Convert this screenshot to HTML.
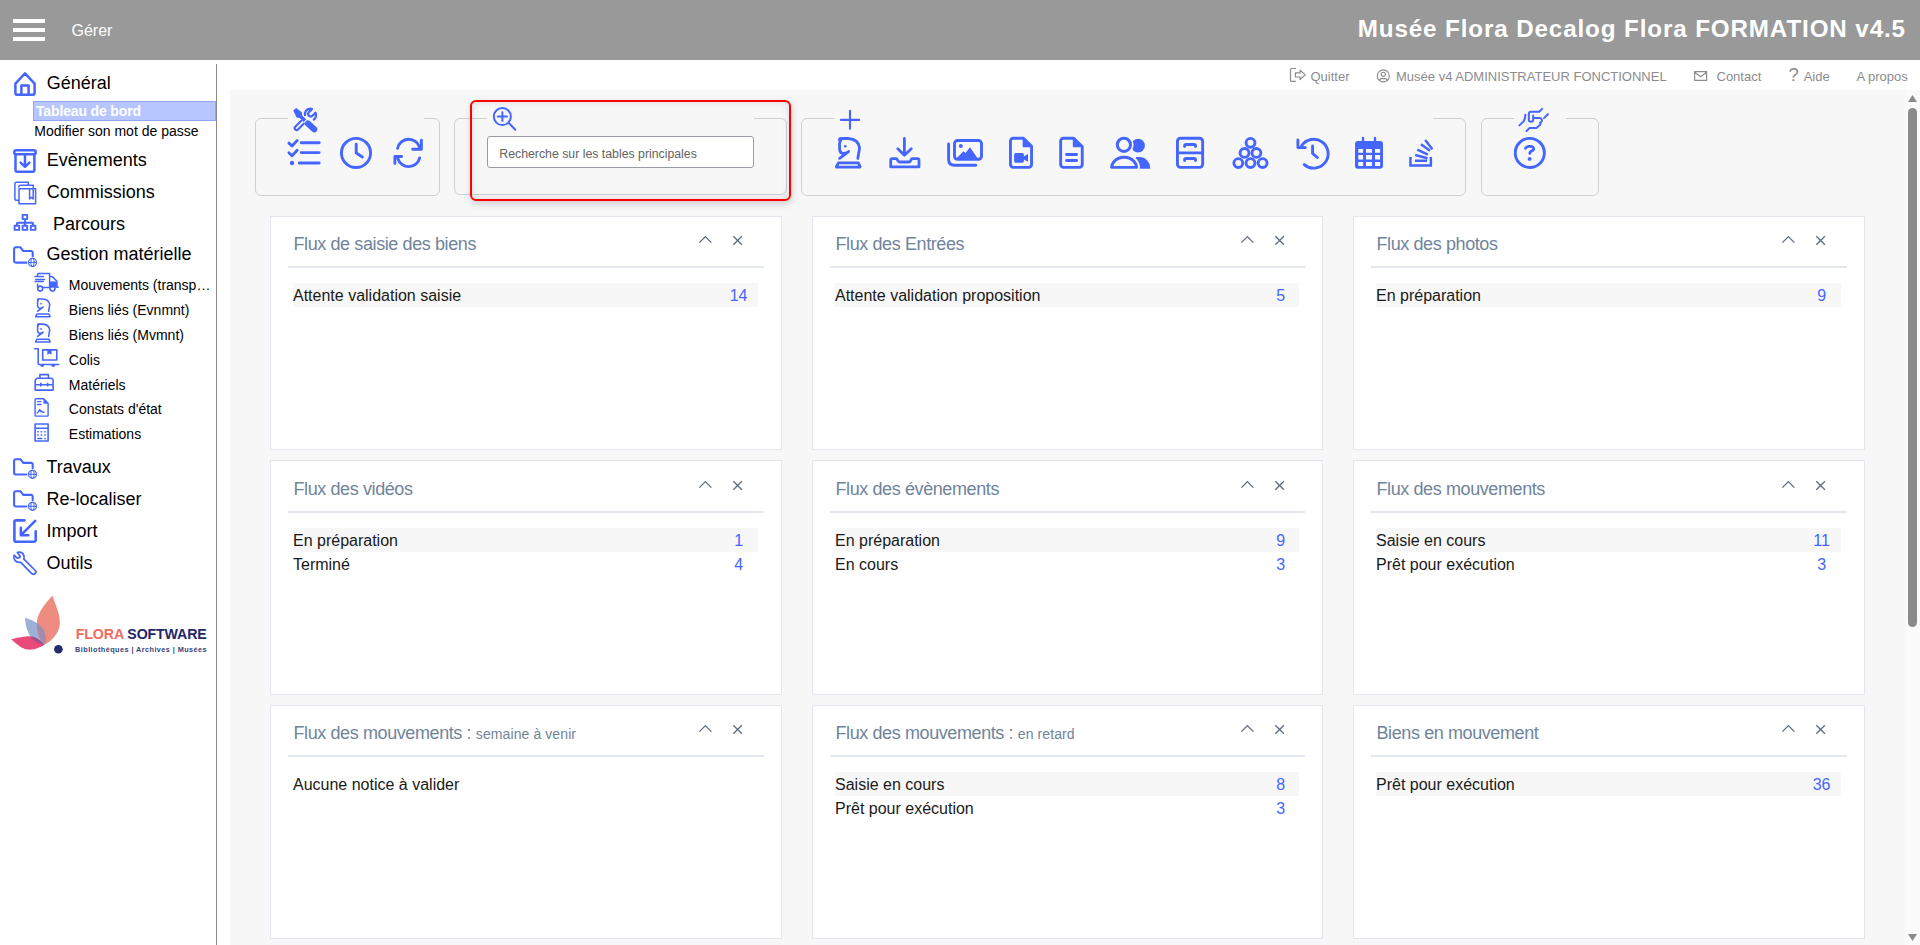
<!DOCTYPE html>
<html><head><meta charset="utf-8"><style>
html,body{margin:0;padding:0}
body{width:1920px;height:945px;overflow:hidden;position:relative;background:#fff;font-family:"Liberation Sans",sans-serif}
.t{position:absolute;white-space:nowrap}
.r{position:absolute}
svg.ov{position:absolute;left:0;top:0;pointer-events:none}
</style></head><body>
<div class="r" style="left:0px;top:0px;width:1920px;height:60px;background:#999999"></div>
<div class="r" style="left:13px;top:19px;width:32px;height:4px;background:#fff"></div>
<div class="r" style="left:13px;top:28px;width:32px;height:4px;background:#fff"></div>
<div class="r" style="left:13px;top:37px;width:32px;height:4px;background:#fff"></div>
<div class="t" style="left:71.50px;top:23.46px;font-size:16px;line-height:16px;color:#fff;font-weight:normal;">Gérer</div>
<div class="t" style="right:14.10px;top:16.81px;font-size:24.2px;line-height:24.2px;color:#fff;font-weight:bold;letter-spacing:0.88px">Musée Flora Decalog Flora FORMATION v4.5</div>
<div class="r" style="left:216px;top:64px;width:1px;height:881px;background:#8a8a8a"></div>
<div class="r" style="left:33px;top:101px;width:183px;height:20px;background:#b7c6ff;box-sizing:border-box;border:1px solid #8ea6ff"></div>
<div class="t" style="left:36.00px;top:104.05px;font-size:14px;line-height:14px;color:#fff;font-weight:bold;letter-spacing:-0.15px">Tableau de bord</div>
<div class="t" style="left:34.30px;top:123.95px;font-size:14px;line-height:14px;color:#000;font-weight:normal;">Modifier son mot de passe</div>
<div class="t" style="left:46.70px;top:74.26px;font-size:18px;line-height:18px;color:#000;font-weight:normal;">Général</div>
<div class="t" style="left:46.80px;top:151.36px;font-size:18px;line-height:18px;color:#000;font-weight:normal;">Evènements</div>
<div class="t" style="left:46.80px;top:183.16px;font-size:18px;line-height:18px;color:#000;font-weight:normal;">Commissions</div>
<div class="t" style="left:53.00px;top:215.36px;font-size:18px;line-height:18px;color:#000;font-weight:normal;">Parcours</div>
<div class="t" style="left:46.50px;top:245.16px;font-size:18px;line-height:18px;color:#000;font-weight:normal;">Gestion matérielle</div>
<div class="t" style="left:46.50px;top:457.96px;font-size:18px;line-height:18px;color:#000;font-weight:normal;">Travaux</div>
<div class="t" style="left:46.50px;top:489.76px;font-size:18px;line-height:18px;color:#000;font-weight:normal;">Re-localiser</div>
<div class="t" style="left:46.50px;top:521.96px;font-size:18px;line-height:18px;color:#000;font-weight:normal;">Import</div>
<div class="t" style="left:46.50px;top:553.76px;font-size:18px;line-height:18px;color:#000;font-weight:normal;">Outils</div>
<div class="t" style="left:68.80px;top:278.05px;font-size:14px;line-height:14px;color:#000;font-weight:normal;">Mouvements (transp…</div>
<div class="t" style="left:68.80px;top:302.75px;font-size:14px;line-height:14px;color:#000;font-weight:normal;">Biens liés (Evnmnt)</div>
<div class="t" style="left:68.80px;top:328.05px;font-size:14px;line-height:14px;color:#000;font-weight:normal;">Biens liés (Mvmnt)</div>
<div class="t" style="left:68.80px;top:352.75px;font-size:14px;line-height:14px;color:#000;font-weight:normal;">Colis</div>
<div class="t" style="left:68.80px;top:377.55px;font-size:14px;line-height:14px;color:#000;font-weight:normal;">Matériels</div>
<div class="t" style="left:68.80px;top:402.45px;font-size:14px;line-height:14px;color:#000;font-weight:normal;">Constats d'état</div>
<div class="t" style="left:68.80px;top:427.35px;font-size:14px;line-height:14px;color:#000;font-weight:normal;">Estimations</div>
<div class="t" style="left:75.80px;top:626.58px;font-size:14.2px;line-height:14.2px;color:#23266b;font-weight:bold;letter-spacing:-0.13px"><span style="color:#ee6c61">FLORA</span> SOFTWARE</div>
<div class="t" style="left:75.10px;top:645.92px;font-size:7.3px;line-height:7.3px;color:#3b3f7a;font-weight:bold;letter-spacing:0.43px">Bibliothèques | Archives | Musées</div>
<div class="t" style="left:1310.50px;top:69.80px;font-size:13px;line-height:13px;color:#8c8c8c;font-weight:normal;">Quitter</div>
<div class="t" style="left:1396.00px;top:69.80px;font-size:13px;line-height:13px;color:#8c8c8c;font-weight:normal;">Musée v4 ADMINISTRATEUR FONCTIONNEL</div>
<div class="t" style="left:1716.50px;top:69.80px;font-size:13px;line-height:13px;color:#8c8c8c;font-weight:normal;">Contact</div>
<div class="t" style="left:1803.70px;top:69.80px;font-size:13px;line-height:13px;color:#8c8c8c;font-weight:normal;">Aide</div>
<div class="t" style="left:1788.60px;top:66.14px;font-size:18.5px;line-height:18.5px;color:#8c8c8c;font-weight:normal;">?</div>
<div class="t" style="left:1856.50px;top:69.80px;font-size:13px;line-height:13px;color:#8c8c8c;font-weight:normal;">A propos</div>
<div class="r" style="left:230px;top:90px;width:1675px;height:855px;background:#f7f7f7"></div>
<div class="r" style="left:1905px;top:90px;width:15px;height:855px;background:#fafafa"></div>
<div class="r" style="left:255px;top:118px;width:185px;height:78px;box-sizing:border-box;border:1px solid #cfcfcf;border-radius:6px"></div>
<div class="r" style="left:288px;top:117px;width:136px;height:3px;background:#f7f7f7"></div>
<div class="r" style="left:454px;top:118px;width:333px;height:77px;box-sizing:border-box;border:1px solid #cfcfcf;border-radius:6px"></div>
<div class="r" style="left:487px;top:117px;width:267px;height:3px;background:#f7f7f7"></div>
<div class="r" style="left:801px;top:118px;width:665px;height:78px;box-sizing:border-box;border:1px solid #cfcfcf;border-radius:6px"></div>
<div class="r" style="left:834px;top:117px;width:599px;height:3px;background:#f7f7f7"></div>
<div class="r" style="left:1481px;top:118px;width:118px;height:78px;box-sizing:border-box;border:1px solid #cfcfcf;border-radius:6px"></div>
<div class="r" style="left:1514px;top:117px;width:52px;height:3px;background:#f7f7f7"></div>
<div class="r" style="left:487px;top:136px;width:267px;height:32px;box-sizing:border-box;background:#fff;border:1px solid #9b9ba6;border-radius:3px"></div>
<div class="t" style="left:499.30px;top:147.69px;font-size:12.3px;line-height:12.3px;color:#636363;font-weight:normal;">Recherche sur les tables principales</div>
<div class="r" style="left:469.5px;top:99.5px;width:321px;height:101px;box-sizing:border-box;border:2px solid #ff0000;border-radius:6px;box-shadow:1px 3px 7px rgba(0,0,0,0.16), inset 0 0 7px rgba(0,0,0,0.13)"></div>
<div class="r" style="left:270px;top:216px;width:512px;height:234px;box-sizing:border-box;background:#fff;border:1px solid #e3e6ec"></div>
<div class="r" style="left:288px;top:266px;width:476px;height:2px;background:#e3e7ee"></div>
<div class="t" style="left:293.50px;top:235.06px;font-size:18px;line-height:18px;color:#70849c;font-weight:normal;letter-spacing:-0.4px">Flux de saisie des biens</div>
<div class="r" style="left:293px;top:283px;width:465px;height:24px;background:#f7f7f7"></div>
<div class="t" style="left:293.00px;top:288.26px;font-size:16px;line-height:16px;color:#1a1a1a;font-weight:normal;">Attente validation saisie</div>
<div class="t" style="left:718.60px;top:288.26px;font-size:16px;line-height:16px;color:#4466ff;font-weight:normal;width:40px;text-align:center">14</div>
<div class="r" style="left:812px;top:216px;width:511px;height:234px;box-sizing:border-box;background:#fff;border:1px solid #e3e6ec"></div>
<div class="r" style="left:830px;top:266px;width:475px;height:2px;background:#e3e7ee"></div>
<div class="t" style="left:835.50px;top:235.06px;font-size:18px;line-height:18px;color:#70849c;font-weight:normal;letter-spacing:-0.4px">Flux des Entrées</div>
<div class="r" style="left:835px;top:283px;width:464px;height:24px;background:#f7f7f7"></div>
<div class="t" style="left:835.00px;top:288.26px;font-size:16px;line-height:16px;color:#1a1a1a;font-weight:normal;">Attente validation proposition</div>
<div class="t" style="left:1260.60px;top:288.26px;font-size:16px;line-height:16px;color:#4466ff;font-weight:normal;width:40px;text-align:center">5</div>
<div class="r" style="left:1353px;top:216px;width:512px;height:234px;box-sizing:border-box;background:#fff;border:1px solid #e3e6ec"></div>
<div class="r" style="left:1371px;top:266px;width:476px;height:2px;background:#e3e7ee"></div>
<div class="t" style="left:1376.50px;top:235.06px;font-size:18px;line-height:18px;color:#70849c;font-weight:normal;letter-spacing:-0.4px">Flux des photos</div>
<div class="r" style="left:1376px;top:283px;width:465px;height:24px;background:#f7f7f7"></div>
<div class="t" style="left:1376.00px;top:288.26px;font-size:16px;line-height:16px;color:#1a1a1a;font-weight:normal;">En préparation</div>
<div class="t" style="left:1801.60px;top:288.26px;font-size:16px;line-height:16px;color:#4466ff;font-weight:normal;width:40px;text-align:center">9</div>
<div class="r" style="left:270px;top:460px;width:512px;height:235px;box-sizing:border-box;background:#fff;border:1px solid #e3e6ec"></div>
<div class="r" style="left:288px;top:511px;width:476px;height:2px;background:#e3e7ee"></div>
<div class="t" style="left:293.50px;top:480.06px;font-size:18px;line-height:18px;color:#70849c;font-weight:normal;letter-spacing:-0.4px">Flux des vidéos</div>
<div class="r" style="left:293px;top:528px;width:465px;height:24px;background:#f7f7f7"></div>
<div class="t" style="left:293.00px;top:533.26px;font-size:16px;line-height:16px;color:#1a1a1a;font-weight:normal;">En préparation</div>
<div class="t" style="left:718.60px;top:533.26px;font-size:16px;line-height:16px;color:#4466ff;font-weight:normal;width:40px;text-align:center">1</div>
<div class="t" style="left:293.00px;top:557.26px;font-size:16px;line-height:16px;color:#1a1a1a;font-weight:normal;">Terminé</div>
<div class="t" style="left:718.60px;top:557.26px;font-size:16px;line-height:16px;color:#4466ff;font-weight:normal;width:40px;text-align:center">4</div>
<div class="r" style="left:812px;top:460px;width:511px;height:235px;box-sizing:border-box;background:#fff;border:1px solid #e3e6ec"></div>
<div class="r" style="left:830px;top:511px;width:475px;height:2px;background:#e3e7ee"></div>
<div class="t" style="left:835.50px;top:480.06px;font-size:18px;line-height:18px;color:#70849c;font-weight:normal;letter-spacing:-0.4px">Flux des évènements</div>
<div class="r" style="left:835px;top:528px;width:464px;height:24px;background:#f7f7f7"></div>
<div class="t" style="left:835.00px;top:533.26px;font-size:16px;line-height:16px;color:#1a1a1a;font-weight:normal;">En préparation</div>
<div class="t" style="left:1260.60px;top:533.26px;font-size:16px;line-height:16px;color:#4466ff;font-weight:normal;width:40px;text-align:center">9</div>
<div class="t" style="left:835.00px;top:557.26px;font-size:16px;line-height:16px;color:#1a1a1a;font-weight:normal;">En cours</div>
<div class="t" style="left:1260.60px;top:557.26px;font-size:16px;line-height:16px;color:#4466ff;font-weight:normal;width:40px;text-align:center">3</div>
<div class="r" style="left:1353px;top:460px;width:512px;height:235px;box-sizing:border-box;background:#fff;border:1px solid #e3e6ec"></div>
<div class="r" style="left:1371px;top:511px;width:476px;height:2px;background:#e3e7ee"></div>
<div class="t" style="left:1376.50px;top:480.06px;font-size:18px;line-height:18px;color:#70849c;font-weight:normal;letter-spacing:-0.4px">Flux des mouvements</div>
<div class="r" style="left:1376px;top:528px;width:465px;height:24px;background:#f7f7f7"></div>
<div class="t" style="left:1376.00px;top:533.26px;font-size:16px;line-height:16px;color:#1a1a1a;font-weight:normal;">Saisie en cours</div>
<div class="t" style="left:1801.60px;top:533.26px;font-size:16px;line-height:16px;color:#4466ff;font-weight:normal;width:40px;text-align:center">11</div>
<div class="t" style="left:1376.00px;top:557.26px;font-size:16px;line-height:16px;color:#1a1a1a;font-weight:normal;">Prêt pour exécution</div>
<div class="t" style="left:1801.60px;top:557.26px;font-size:16px;line-height:16px;color:#4466ff;font-weight:normal;width:40px;text-align:center">3</div>
<div class="r" style="left:270px;top:705px;width:512px;height:234px;box-sizing:border-box;background:#fff;border:1px solid #e3e6ec"></div>
<div class="r" style="left:288px;top:755px;width:476px;height:2px;background:#e3e7ee"></div>
<div class="t" style="left:293.50px;top:724.06px;font-size:18px;line-height:18px;color:#70849c;font-weight:normal;letter-spacing:-0.4px">Flux des mouvements : <span style="font-size:14px;letter-spacing:0.1px">semaine à venir</span></div>
<div class="t" style="left:293.00px;top:777.26px;font-size:16px;line-height:16px;color:#1a1a1a;font-weight:normal;">Aucune notice à valider</div>
<div class="r" style="left:812px;top:705px;width:511px;height:234px;box-sizing:border-box;background:#fff;border:1px solid #e3e6ec"></div>
<div class="r" style="left:830px;top:755px;width:475px;height:2px;background:#e3e7ee"></div>
<div class="t" style="left:835.50px;top:724.06px;font-size:18px;line-height:18px;color:#70849c;font-weight:normal;letter-spacing:-0.4px">Flux des mouvements : <span style="font-size:14px;letter-spacing:0.1px">en retard</span></div>
<div class="r" style="left:835px;top:772px;width:464px;height:24px;background:#f7f7f7"></div>
<div class="t" style="left:835.00px;top:777.26px;font-size:16px;line-height:16px;color:#1a1a1a;font-weight:normal;">Saisie en cours</div>
<div class="t" style="left:1260.60px;top:777.26px;font-size:16px;line-height:16px;color:#4466ff;font-weight:normal;width:40px;text-align:center">8</div>
<div class="t" style="left:835.00px;top:801.26px;font-size:16px;line-height:16px;color:#1a1a1a;font-weight:normal;">Prêt pour exécution</div>
<div class="t" style="left:1260.60px;top:801.26px;font-size:16px;line-height:16px;color:#4466ff;font-weight:normal;width:40px;text-align:center">3</div>
<div class="r" style="left:1353px;top:705px;width:512px;height:234px;box-sizing:border-box;background:#fff;border:1px solid #e3e6ec"></div>
<div class="r" style="left:1371px;top:755px;width:476px;height:2px;background:#e3e7ee"></div>
<div class="t" style="left:1376.50px;top:724.06px;font-size:18px;line-height:18px;color:#70849c;font-weight:normal;letter-spacing:-0.4px">Biens en mouvement</div>
<div class="r" style="left:1376px;top:772px;width:465px;height:24px;background:#f7f7f7"></div>
<div class="t" style="left:1376.00px;top:777.26px;font-size:16px;line-height:16px;color:#1a1a1a;font-weight:normal;">Prêt pour exécution</div>
<div class="t" style="left:1801.60px;top:777.26px;font-size:16px;line-height:16px;color:#4466ff;font-weight:normal;width:40px;text-align:center">36</div>
<div class="r" style="left:1908px;top:108px;width:9px;height:519px;background:#8a8a8a;border-radius:4.5px"></div>
<svg class="ov" width="1920" height="945" viewBox="0 0 1920 945">
<path d="M699.4 242.6 L705.4 236.6 L711.4 242.6" fill="none" stroke="#5d6d82" stroke-width="1.3"/>
<path d="M733.3000000000001 236.2 L741.9 244.8 M741.9 236.2 L733.3000000000001 244.8" fill="none" stroke="#5d6d82" stroke-width="1.3"/>
<path d="M1241.4 242.6 L1247.4 236.6 L1253.4 242.6" fill="none" stroke="#5d6d82" stroke-width="1.3"/>
<path d="M1275.3 236.2 L1283.8999999999999 244.8 M1283.8999999999999 236.2 L1275.3 244.8" fill="none" stroke="#5d6d82" stroke-width="1.3"/>
<path d="M1782.4 242.6 L1788.4 236.6 L1794.4 242.6" fill="none" stroke="#5d6d82" stroke-width="1.3"/>
<path d="M1816.3 236.2 L1824.8999999999999 244.8 M1824.8999999999999 236.2 L1816.3 244.8" fill="none" stroke="#5d6d82" stroke-width="1.3"/>
<path d="M699.4 487.6 L705.4 481.6 L711.4 487.6" fill="none" stroke="#5d6d82" stroke-width="1.3"/>
<path d="M733.3000000000001 481.2 L741.9 489.8 M741.9 481.2 L733.3000000000001 489.8" fill="none" stroke="#5d6d82" stroke-width="1.3"/>
<path d="M1241.4 487.6 L1247.4 481.6 L1253.4 487.6" fill="none" stroke="#5d6d82" stroke-width="1.3"/>
<path d="M1275.3 481.2 L1283.8999999999999 489.8 M1283.8999999999999 481.2 L1275.3 489.8" fill="none" stroke="#5d6d82" stroke-width="1.3"/>
<path d="M1782.4 487.6 L1788.4 481.6 L1794.4 487.6" fill="none" stroke="#5d6d82" stroke-width="1.3"/>
<path d="M1816.3 481.2 L1824.8999999999999 489.8 M1824.8999999999999 481.2 L1816.3 489.8" fill="none" stroke="#5d6d82" stroke-width="1.3"/>
<path d="M699.4 731.6 L705.4 725.6 L711.4 731.6" fill="none" stroke="#5d6d82" stroke-width="1.3"/>
<path d="M733.3000000000001 725.2 L741.9 733.8 M741.9 725.2 L733.3000000000001 733.8" fill="none" stroke="#5d6d82" stroke-width="1.3"/>
<path d="M1241.4 731.6 L1247.4 725.6 L1253.4 731.6" fill="none" stroke="#5d6d82" stroke-width="1.3"/>
<path d="M1275.3 725.2 L1283.8999999999999 733.8 M1283.8999999999999 725.2 L1275.3 733.8" fill="none" stroke="#5d6d82" stroke-width="1.3"/>
<path d="M1782.4 731.6 L1788.4 725.6 L1794.4 731.6" fill="none" stroke="#5d6d82" stroke-width="1.3"/>
<path d="M1816.3 725.2 L1824.8999999999999 733.8 M1824.8999999999999 725.2 L1816.3 733.8" fill="none" stroke="#5d6d82" stroke-width="1.3"/>
<path d="M15.4 93 V83.6 L25 73.3 L34.6 83.6 V93 a1.7 1.7 0 0 1 -1.7 1.7 H17.1 a1.7 1.7 0 0 1 -1.7 -1.7 Z M21.4 94.7 V85.4 H28.6 V94.7" fill="none" stroke="#4466ff" stroke-width="2.5" stroke-linecap="round" stroke-linejoin="round" />
<path d="M16.2 150.3 H33.8 a2 2 0 0 1 2 2 a2 2 0 0 1 -2 2 H16.2 a2 2 0 0 1 -2 -2 a2 2 0 0 1 2 -2 Z" fill="none" stroke="#4466ff" stroke-width="2.4" stroke-linecap="round" stroke-linejoin="round" />
<path d="M15.5 154.5 V170 a1.7 1.7 0 0 0 1.7 1.7 H32.7 a1.7 1.7 0 0 0 1.7 -1.7 V154.5 M25 155 V166.5 M20.6 162.6 L25 166.8 L29.4 162.6" fill="none" stroke="#4466ff" stroke-width="2.5" stroke-linecap="round" stroke-linejoin="round" />
<path d="M18.8 200.3 H16.7 a1.8 1.8 0 0 1 -1.8 -1.8 V184 a1.8 1.8 0 0 1 1.8 -1.8 H28.3 V185 M18.8 187 a1.8 1.8 0 0 1 1.8 -1.8 H33.3 V188.7 M19 188.8 H35.6 V203.8 H19 Z M29.6 188.8 V199 L31.4 197.4 L33.2 199 V188.8" fill="none" stroke="#4466ff" stroke-width="1.5" stroke-linecap="round" stroke-linejoin="round" />
<path d="M22.6 214.9 h4.6 v4.2 h-4.6 Z M14.6 225.7 h4.6 v4.2 h-4.6 Z M22.6 225.7 h4.6 v4.2 h-4.6 Z M30.8 225.7 h4.6 v4.2 h-4.6 Z M24.9 219.1 V225.7 M16.9 225.7 V223.8 a1 1 0 0 1 1 -1 H32.1 a1 1 0 0 1 1 1 V225.7" fill="none" stroke="#4466ff" stroke-width="1.9" stroke-linecap="round" stroke-linejoin="round" />
<path d="M27.0 262.59999999999997 H15.8 a1.7 1.7 0 0 1 -1.7 -1.7 V248.99999999999997 a1.7 1.7 0 0 1 1.7 -1.7 H20.4 L23.2 250.99999999999997 H31 a1.7 1.7 0 0 1 1.7 1.7 V256.7" fill="none" stroke="#4466ff" stroke-width="2.1" stroke-linecap="round" stroke-linejoin="round" />
<circle cx="32.5" cy="262.4" r="5.3" fill="#fff"/><circle cx="32.5" cy="262.4" r="4" fill="#fff" stroke="#4466ff" stroke-width="1.2"/>
<path d="M28.5 262.4 H36.5" stroke="#4466ff" stroke-width="1"/><ellipse cx="32.5" cy="262.4" rx="1.7" ry="4" fill="none" stroke="#4466ff" stroke-width="1"/>
<path d="M27.0 474.50000000000006 H15.8 a1.7 1.7 0 0 1 -1.7 -1.7 V460.90000000000003 a1.7 1.7 0 0 1 1.7 -1.7 H20.4 L23.2 462.90000000000003 H31 a1.7 1.7 0 0 1 1.7 1.7 V468.6" fill="none" stroke="#4466ff" stroke-width="2.1" stroke-linecap="round" stroke-linejoin="round" />
<circle cx="32.5" cy="474.30000000000007" r="5.3" fill="#fff"/><circle cx="32.5" cy="474.30000000000007" r="4" fill="#fff" stroke="#4466ff" stroke-width="1.2"/>
<path d="M28.5 474.30000000000007 H36.5" stroke="#4466ff" stroke-width="1"/><ellipse cx="32.5" cy="474.30000000000007" rx="1.7" ry="4" fill="none" stroke="#4466ff" stroke-width="1"/>
<path d="M27.0 506.50000000000006 H15.8 a1.7 1.7 0 0 1 -1.7 -1.7 V492.90000000000003 a1.7 1.7 0 0 1 1.7 -1.7 H20.4 L23.2 494.90000000000003 H31 a1.7 1.7 0 0 1 1.7 1.7 V500.6" fill="none" stroke="#4466ff" stroke-width="2.1" stroke-linecap="round" stroke-linejoin="round" />
<circle cx="32.5" cy="506.30000000000007" r="5.3" fill="#fff"/><circle cx="32.5" cy="506.30000000000007" r="4" fill="#fff" stroke="#4466ff" stroke-width="1.2"/>
<path d="M28.5 506.30000000000007 H36.5" stroke="#4466ff" stroke-width="1"/><ellipse cx="32.5" cy="506.30000000000007" rx="1.7" ry="4" fill="none" stroke="#4466ff" stroke-width="1"/>
<path d="M24.5 520.4 H16.2 a1.8 1.8 0 0 0 -1.8 1.8 V539.9 a1.8 1.8 0 0 0 1.8 1.8 H33.9 a1.8 1.8 0 0 0 1.8 -1.8 V531.4 M35.2 520.9 L21.2 534.9 M20.9 527.8 V535.2 H28.3" fill="none" stroke="#4466ff" stroke-width="2.6" stroke-linecap="round" stroke-linejoin="round" />
<path d="M17.4 552.4 Q21.9 551.2 23.6 554.9 Q24.5 557.3 23.9 559.2 L35.3 570.5 a2.35 2.35 0 0 1 -3.3 3.3 L20.7 562.4 Q16.1 562.8 14.4 559.4 Q13.4 557.2 14.2 555.2 L16.9 557.9 Q19.3 558.6 20.3 556.4 Z" fill="none" stroke="#4466ff" stroke-width="1.75" stroke-linecap="round" stroke-linejoin="round" />
<path d="M37.6 275.2 V274.3 a0.8 0.8 0 0 1 0.8 -0.8 H49.6 V287.3 M37.6 284.2 V287.3 M35 276.6 H43.3 M35.8 279.4 H44.5 M35 281.6 H43.3 M49.6 276.6 H52.2 L56.9 281.2 V287.3 H58.2 M42.8 287.5 H49.9" fill="none" stroke="#4466ff" stroke-width="1.5" stroke-linecap="round" stroke-linejoin="round" />
<path d="M49.6 281.4 H57 V287.6 H49.6 Z" fill="#4466ff" />
<circle cx="40.2" cy="288.6" r="2.5" fill="none" stroke="#4466ff" stroke-width="1.6"/><circle cx="52.5" cy="288.6" r="2.5" fill="none" stroke="#4466ff" stroke-width="1.6"/>
<g transform="translate(-470.338 213.074) scale(0.605 0.62)"><path d="M839.6 158.3 L848.6 151.6 M848.6 151.6 Q845.5 153.7 842.6 153.4 Q840 152.8 839.6 149.5 L839.5 143.8 Q839.7 141.3 840.8 140.6 L839.3 139.6 Q839.6 138.5 841 138.5 H848.3 Q858.3 139 859.6 148 L857.8 158.4 M838.5 162.8 H858.3 L860.2 166.8 L859.8 167.2 H836.6 L836.4 166.7 Z" fill="none" stroke="#4466ff" stroke-width="2.6" stroke-linecap="round" stroke-linejoin="round"/><circle cx="845.2" cy="146.2" r="1.4" fill="#4466ff"/></g>
<g transform="translate(-470.338 238.274) scale(0.605 0.62)"><path d="M839.6 158.3 L848.6 151.6 M848.6 151.6 Q845.5 153.7 842.6 153.4 Q840 152.8 839.6 149.5 L839.5 143.8 Q839.7 141.3 840.8 140.6 L839.3 139.6 Q839.6 138.5 841 138.5 H848.3 Q858.3 139 859.6 148 L857.8 158.4 M838.5 162.8 H858.3 L860.2 166.8 L859.8 167.2 H836.6 L836.4 166.7 Z" fill="none" stroke="#4466ff" stroke-width="2.6" stroke-linecap="round" stroke-linejoin="round"/><circle cx="845.2" cy="146.2" r="1.4" fill="#4466ff"/></g>
<path d="M34.6 348.7 H38.2 V363.3 a1.2 1.2 0 0 0 1.2 1.2 H58.6" fill="none" stroke="#4466ff" stroke-width="1.6" stroke-linecap="round" stroke-linejoin="round" />
<path d="M42.7 349.9 H56.8 V360 H42.7 Z" fill="none" stroke="#4466ff" stroke-width="1.6" stroke-linecap="round" stroke-linejoin="round" />
<path d="M47.3 349.6 H51.6 V354.7 L49.5 353.6 L47.3 354.7 Z" fill="#4466ff" />
<path d="M40.2 365 a2 2 0 0 0 4 0 Z M51.3 365 a2 2 0 0 0 4 0 Z" fill="#4466ff" />
<path d="M39.9 378 V374.6 H48.4 V378 M37 378.3 H51.5 L53.1 379.9 V390.1 H35.2 V380 Z M35.2 384.7 H53.1" fill="none" stroke="#4466ff" stroke-width="1.6" stroke-linecap="round" stroke-linejoin="round" />
<path d="M40 382.8 h1.7 v3.8 h-1.7 Z M46.8 382.8 h1.7 v3.8 h-1.7 Z" fill="#4466ff" />
<path d="M35.1 399.6 a0.9 0.9 0 0 1 0.9 -0.9 H43.7 L48.1 403.3 V415.2 a0.9 0.9 0 0 1 -0.9 0.9 H36 a0.9 0.9 0 0 1 -0.9 -0.9 Z M37.5 401.6 H41 M37.5 404.5 H41 M37.2 413 Q38.5 412 39.7 409.5 Q40.6 413 41.5 410.8 Q42.5 412.5 44 412.3" fill="none" stroke="#4466ff" stroke-width="1.4" stroke-linecap="round" stroke-linejoin="round" />
<path d="M43.5 398.7 L48.6 403.8 H43.5 Z" fill="#4466ff" />
<path d="M35.1 424 H48.1 V441 H35.1 Z M35.1 428.3 H48.1" fill="none" stroke="#4466ff" stroke-width="1.6" stroke-linecap="round" stroke-linejoin="round" />
<path d="M37.3 431 h1.5 v1.4 h-1.5 Z M40.7 431 h1.5 v1.4 h-1.5 Z M44.2 431 h1.5 v1.4 h-1.5 Z M37.3 434.3 h1.5 v1.4 h-1.5 Z M40.7 434.3 h1.5 v1.4 h-1.5 Z M44.2 434.3 h1.5 v1.4 h-1.5 Z M37.3 437.8 h5 v1.4 h-5 Z M44.2 437.8 h1.5 v1.4 h-1.5 Z" fill="#4466ff" />
<path d="M293.3 110.6 L296.1 107.9 L301.8 112.3 L302.2 115.4 L306.2 119.4 L303.6 121.9 L299.6 117.9 L296.6 117.5 Z" fill="#4466ff" />
<path d="M307.9 123.5 L314.2 129.3" fill="none" stroke="#4466ff" stroke-width="6.2" stroke-linecap="round" stroke-linejoin="round" />
<path d="M301.2 120.8 L295.3 126.7 a1.9 1.9 0 0 0 2.7 2.7 L303.9 123.5" fill="none" stroke="#4466ff" stroke-width="2.1" stroke-linecap="round" stroke-linejoin="round" />
<path d="M305 115.2 Q304.6 110.3 309 108.9 Q310.6 108.5 311.9 109.1 L308.9 112.2 a2.5 2.5 0 0 0 3.6 3.6 L315.5 112.8 Q316.4 114.6 316 116.3 Q315.4 118.5 313.9 119.5" fill="none" stroke="#4466ff" stroke-width="2.3" stroke-linecap="round" stroke-linejoin="round" />
<path d="M288.9 143.1 L292 146 L297.2 140.6 M288.9 152.8 L292 155.7 L297.2 150.3" fill="none" stroke="#4466ff" stroke-width="2.9" stroke-linecap="round" stroke-linejoin="round" />
<path d="M301.2 142.7 H319.2 M301.2 152.6 H319.2 M299.2 163 H319.2" fill="none" stroke="#4466ff" stroke-width="2.9" stroke-linecap="round" stroke-linejoin="round" />
<circle cx="292" cy="163" r="2.2" fill="#4466ff"/>
<circle cx="356" cy="152.9" r="14.55" fill="none" stroke="#4466ff" stroke-width="2.9"/>
<path d="M356.2 144.3 V153.1 L362.4 156.9" fill="none" stroke="#4466ff" stroke-width="2.9" stroke-linecap="round" stroke-linejoin="round" />
<path d="M397.6 148.3 A11.3 11.3 0 0 1 419.6 147.6 M421.4 140.2 V149.3 H412.6" fill="none" stroke="#4466ff" stroke-width="2.9" stroke-linecap="round" stroke-linejoin="round" />
<path d="M419.7 157.9 A11.3 11.3 0 0 1 397.8 158.4 M394.9 163.6 V156.5 H401.6" fill="none" stroke="#4466ff" stroke-width="2.9" stroke-linecap="round" stroke-linejoin="round" />
<circle cx="502.35" cy="116.55" r="8.55" fill="none" stroke="#4466ff" stroke-width="2"/>
<path d="M497.8 116.6 H507 M502.4 112.2 V121.1 M508.8 123 L515.3 129.7" fill="none" stroke="#4466ff" stroke-width="2" stroke-linecap="round" stroke-linejoin="round" />
<path d="M850 110.8 V128.7 M840.9 119.9 H859.1" fill="none" stroke="#4466ff" stroke-width="2.1" stroke-linecap="round" stroke-linejoin="round" />
<path d="M839.6 158.3 L848.6 151.6 M848.6 151.6 Q845.5 153.7 842.6 153.4 Q840 152.8 839.6 149.5 L839.5 143.8 Q839.7 141.3 840.8 140.6 L839.3 139.6 Q839.6 138.5 841 138.5 H848.3 Q858.3 139 859.6 148 L857.8 158.4" fill="none" stroke="#4466ff" stroke-width="2.8" stroke-linecap="round" stroke-linejoin="round" />
<circle cx="845.2" cy="146.2" r="1.3" fill="#4466ff"/>
<path d="M838.5 162.8 H858.3 L860.2 166.8 L859.8 167.2 H836.6 L836.4 166.7 Z" fill="none" stroke="#4466ff" stroke-width="2.8" stroke-linecap="round" stroke-linejoin="round" />
<path d="M904.4 138.4 V154.8 M897.8 148.7 L904.4 155.2 L911.3 148.7 M896.6 158.7 L898.2 161 Q898.6 162 900 162 H908.7 Q910 162 910.4 161 L911.8 158.7 H917.3 a1.7 1.7 0 0 1 1.7 1.7 V166.9 H890.7 V160.4 a1.7 1.7 0 0 1 1.7 -1.7 Z" fill="none" stroke="#4466ff" stroke-width="2.8" stroke-linecap="round" stroke-linejoin="round" />
<path d="M957.5 140.55 H978.5 a3 3 0 0 1 3 3 V156.25 a3 3 0 0 1 -3 3 H957.5 a3 3 0 0 1 -3 -3 V143.55 a3 3 0 0 1 3 -3 Z" fill="none" stroke="#4466ff" stroke-width="2.9" stroke-linecap="round" stroke-linejoin="round" />
<path d="M956.7 158.2 L963.3 151.3 L965.5 152.9 L970 147.3 L977.5 158.2 Z" fill="#4466ff" />
<circle cx="960.8" cy="145.9" r="2" fill="#4466ff"/>
<path d="M948.6 144 V159.5 Q948.6 165.2 954.6 165.2 H975.8" fill="none" stroke="#4466ff" stroke-width="2.9" stroke-linecap="round" stroke-linejoin="round" />
<path d="M1013.3 138.25 H1023.5 L1031.55 146.3 V164.5 a2.85 2.85 0 0 1 -2.85 2.85 H1013.3 a2.85 2.85 0 0 1 -2.85 -2.85 V141.1 a2.85 2.85 0 0 1 2.85 -2.85 Z" fill="none" stroke="#4466ff" stroke-width="2.9" stroke-linecap="round" stroke-linejoin="round" />
<path d="M1022.6 138.6 L1031.4 147.3 H1023.3 a0.7 0.7 0 0 1 -0.7 -0.7 Z" fill="#4466ff" />
<path d="M1015.8 152.9 H1022.2 a1.7 1.7 0 0 1 1.7 1.7 V156.2 L1028 154 V161.8 L1023.9 159.5 V161.1 a1.7 1.7 0 0 1 -1.7 1.7 H1015.8 a1.7 1.7 0 0 1 -1.7 -1.7 V154.6 a1.7 1.7 0 0 1 1.7 -1.7 Z" fill="#4466ff" />
<path d="M1063.5 138.25 H1073.7 L1082.25 146.5 V164.5 a2.85 2.85 0 0 1 -2.85 2.85 H1063.5 a2.85 2.85 0 0 1 -2.85 -2.85 V141.1 a2.85 2.85 0 0 1 2.85 -2.85 Z" fill="none" stroke="#4466ff" stroke-width="2.9" stroke-linecap="round" stroke-linejoin="round" />
<path d="M1072.8 138.6 L1082 147.3 H1073.5 a0.7 0.7 0 0 1 -0.7 -0.7 Z" fill="#4466ff" />
<path d="M1066.5 154.5 H1076.6 M1066.5 160.5 H1076.6" fill="none" stroke="#4466ff" stroke-width="2.9" stroke-linecap="round" stroke-linejoin="round" />
<circle cx="1138.1" cy="145.6" r="6.8" fill="#4466ff"/>
<path d="M1136 157.1 H1139.5 a10.6 10.6 0 0 1 10.6 10.6 V168.8 H1136 Z" fill="#4466ff" />
<circle cx="1123.9" cy="144.85" r="9.7" fill="#f7f7f7"/>
<path d="M1110.3 168.6 a12.9 12 0 0 1 12.9 -12.6 h1.5 a12.9 12 0 0 1 12.9 12.6 Z" fill="none" stroke="#f7f7f7" stroke-width="4.6" stroke-linejoin="round"/>
<circle cx="1123.9" cy="144.85" r="6.6" fill="none" stroke="#4466ff" stroke-width="3"/>
<path d="M1111.5 167.35 a12.3 10.9 0 0 1 11.9 -10.1 h1.4 a12.3 10.9 0 0 1 11.9 10.1 Z" fill="none" stroke="#4466ff" stroke-width="2.9" stroke-linecap="round" stroke-linejoin="round" />
<path d="M1180.45 138.25 H1199.65 a3 3 0 0 1 3 3 V164.35 a3 3 0 0 1 -3 3 H1180.45 a3 3 0 0 1 -3 -3 V141.25 a3 3 0 0 1 3 -3 Z M1177.5 152.9 H1202.6 M1184.6 146.6 V145.8 a1.3 1.3 0 0 1 1.3 -1.3 H1194.2 a1.3 1.3 0 0 1 1.3 1.3 V146.6 M1184.6 160.5 V159.8 a1.3 1.3 0 0 1 1.3 -1.3 H1194.2 a1.3 1.3 0 0 1 1.3 1.3 V160.5" fill="none" stroke="#4466ff" stroke-width="2.9" stroke-linecap="round" stroke-linejoin="round" />
<circle cx="1250.5" cy="142.8" r="4.45" fill="none" stroke="#4466ff" stroke-width="2.9"/>
<circle cx="1244.5" cy="152.95" r="4.45" fill="none" stroke="#4466ff" stroke-width="2.9"/>
<circle cx="1256.4" cy="152.95" r="4.45" fill="none" stroke="#4466ff" stroke-width="2.9"/>
<circle cx="1238.3" cy="163.1" r="4.45" fill="none" stroke="#4466ff" stroke-width="2.9"/>
<circle cx="1250.5" cy="163.1" r="4.45" fill="none" stroke="#4466ff" stroke-width="2.9"/>
<circle cx="1262.6" cy="163.1" r="4.45" fill="none" stroke="#4466ff" stroke-width="2.9"/>
<path d="M1301.6 145.8 A14.45 14.45 0 1 1 1304.2 164.6 M1297.9 139.9 V147.6 H1305.4 M1312.6 145.9 V153.5 L1317.4 157.5" fill="none" stroke="#4466ff" stroke-width="2.9" stroke-linecap="round" stroke-linejoin="round" />
<path d="M1358 141 H1380 a3 3 0 0 1 3 3 V165.7 a3 3 0 0 1 -3 3 H1358 a3 3 0 0 1 -3 -3 V144 a3 3 0 0 1 3 -3 Z M1358.3 148.9 V152.8 H1363.1 V148.9 Z M1366 148.9 V152.8 H1372 V148.9 Z M1375 148.9 V152.8 H1380.1 V148.9 Z M1358.3 155.1 V159.6 H1363.1 V155.1 Z M1366 155.1 V159.6 H1372 V155.1 Z M1375 155.1 V159.6 H1380.1 V155.1 Z M1358.3 162 V166 H1363.1 V162 Z M1366 162 V166 H1372 V162 Z M1375 162 V166 H1380.1 V162 Z" fill="#4466ff" fill-rule="evenodd"/>
<path d="M1363 138 V141 M1375 138 V141" fill="none" stroke="#4466ff" stroke-width="2.4" stroke-linecap="round" stroke-linejoin="round" />
<path d="M1410.45 157.1 V165.45 H1430.85 V157.1" fill="none" stroke="#4466ff" stroke-width="2.5"/>
<path d="M1415 160.8 H1427.1 M1415.2 155 L1427.5 158.3 M1417.3 149.6 L1427.9 154.6 M1420.9 144.2 L1430 150.8 M1425.2 140 L1432.4 149.2" fill="none" stroke="#4466ff" stroke-width="2.5"/>
<path d="M1542.1 108.9 L1539.3 111.8 H1531.2 a2.4 2.4 0 0 0 -2.4 2.4 V119.6 a2.2 2.2 0 0 0 4.4 0 V115.6 M1533.2 117.9 H1539.7 a2.4 2.4 0 0 1 1.4 4.2 L1540.1 122.7 a1.5 1.5 0 0 1 0 2 L1536.5 128.1 H1529.4 L1526.6 131 M1525.4 114.8 Q1525 119.5 1523.8 121.1 L1519.4 125.4 M1547.9 114.2 L1544 118.1" fill="none" stroke="#4466ff" stroke-width="2" stroke-linecap="round" stroke-linejoin="round" />
<circle cx="1529.8" cy="152.9" r="14.55" fill="none" stroke="#4466ff" stroke-width="2.9"/>
<path d="M1525.5 148.3 Q1526.5 146.4 1528.7 146.4 H1531.4 a2.3 2.3 0 0 1 1.2 4.2 L1530.7 151.6 Q1529.8 152.2 1529.8 153.4" fill="none" stroke="#4466ff" stroke-width="2.8" stroke-linecap="round" stroke-linejoin="round" />
<circle cx="1529.6" cy="158.9" r="1.9" fill="#4466ff"/>
<path d="M1295.6 68.5 H1291.6 a1.1 1.1 0 0 0 -1.1 1.1 V80.2 a1.1 1.1 0 0 0 1.1 1.1 H1295.6 M1295.4 72.9 H1300.1 V70.3 L1305.3 74.9 L1300.1 79.5 V77 H1295.4 Z" fill="none" stroke="#8c8c8c" stroke-width="1.2" stroke-linecap="round" stroke-linejoin="round" />
<circle cx="1383.3" cy="75.9" r="6" fill="none" stroke="#8c8c8c" stroke-width="1.1"/><circle cx="1383.3" cy="74.3" r="2.1" fill="none" stroke="#8c8c8c" stroke-width="1.1"/>
<path d="M1379.3 80.6 L1380.6 78.6 H1386 L1387.3 80.6" fill="none" stroke="#8c8c8c" stroke-width="1.1" stroke-linecap="round" stroke-linejoin="round" />
<path d="M1694.6 71.6 H1706.6 V80.3 H1694.6 Z M1694.6 72.3 L1700.6 76.7 L1706.6 72.3" fill="none" stroke="#8c8c8c" stroke-width="1.2" stroke-linecap="round" stroke-linejoin="round" />
<defs><clipPath id="cS"><path d="M52.4 595.6 C47 602 38 611 36.9 622 C36.2 632 40 641 44.3 644.8 C52 641 59.5 633 59.9 623.3 C60 612 54 602 52.4 595.6 Z"/></clipPath><clipPath id="cP"><path d="M11 639.3 C16 643.5 21 648.5 27.3 649.6 C34 650.5 40 647.5 44.3 644.8 C40 639.5 34 636 28 636.2 C22 636.5 15 638.5 11 639.3 Z"/></clipPath></defs>
<path d="M52.4 595.6 C47 602 38 611 36.9 622 C36.2 632 40 641 44.3 644.8 C52 641 59.5 633 59.9 623.3 C60 612 54 602 52.4 595.6 Z" fill="#ef8c82"/><path d="M25 617.8 C25.5 626 27.5 634 33 639.5 C37 642.5 41 644 44.3 644.8 C47 640 46.5 633 42 627.5 C37.5 622 30 619.5 25 617.8 Z" fill="#9db0d8"/><path d="M11 639.3 C16 643.5 21 648.5 27.3 649.6 C34 650.5 40 647.5 44.3 644.8 C40 639.5 34 636 28 636.2 C22 636.5 15 638.5 11 639.3 Z" fill="#e84a79"/>
<path d="M25 617.8 C25.5 626 27.5 634 33 639.5 C37 642.5 41 644 44.3 644.8 C47 640 46.5 633 42 627.5 C37.5 622 30 619.5 25 617.8 Z" fill="#a68aa8" clip-path="url(#cS)"/><path d="M25 617.8 C25.5 626 27.5 634 33 639.5 C37 642.5 41 644 44.3 644.8 C47 640 46.5 633 42 627.5 C37.5 622 30 619.5 25 617.8 Z" fill="#9a5190" clip-path="url(#cP)"/>
<circle cx="58.4" cy="649.3" r="4.3" fill="#262a6e"/>
<path d="M1908 102 L1917 102 L1912.5 95 Z" fill="#8a8a8a"/>
<path d="M1908 934 L1917 934 L1912.5 941 Z" fill="#8a8a8a"/>
</svg>
</body></html>
